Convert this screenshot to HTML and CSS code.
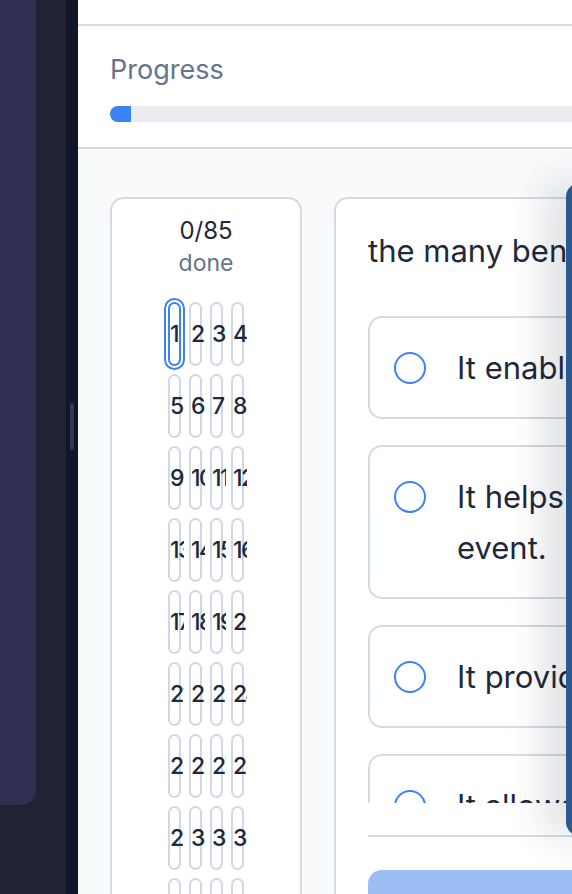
FILE: index.html
```html
<!DOCTYPE html>
<html lang="en">
<head>
<meta charset="utf-8">
<title>Quiz</title>
<link rel="stylesheet" href="styles.css">
</head>
<body>
<div class="sidebar"><div class="sidebar-panel"></div></div>
<div class="rail"><div class="thumb"></div></div>
<main class="main">
  <div class="topbar"></div>
  <section class="progress">
    <div class="progress-label">Progress</div>
    <div class="track"><div class="fill"></div></div>
  </section>
  <section class="content">
    <aside class="nav-card">
      <div class="counter">0/85</div>
      <div class="done">done</div>
      <div class="grid">
        <div class="pill current">1</div><div class="pill">2</div><div class="pill">3</div><div class="pill">4</div>
        <div class="pill">5</div><div class="pill">6</div><div class="pill">7</div><div class="pill">8</div>
        <div class="pill">9</div><div class="pill">10</div><div class="pill">11</div><div class="pill">12</div>
        <div class="pill">13</div><div class="pill">14</div><div class="pill">15</div><div class="pill">16</div>
        <div class="pill">17</div><div class="pill">18</div><div class="pill">19</div><div class="pill">20</div>
        <div class="pill">21</div><div class="pill">22</div><div class="pill">23</div><div class="pill">24</div>
        <div class="pill">25</div><div class="pill">26</div><div class="pill">27</div><div class="pill">28</div>
        <div class="pill">29</div><div class="pill">30</div><div class="pill">31</div><div class="pill">32</div>
        <div class="pill">33</div><div class="pill">34</div><div class="pill">35</div><div class="pill">36</div>
        <div class="pill">37</div><div class="pill">38</div><div class="pill">39</div><div class="pill">40</div>
        <div class="pill">41</div><div class="pill">42</div><div class="pill">43</div><div class="pill">44</div>
        <div class="pill">45</div><div class="pill">46</div><div class="pill">47</div><div class="pill">48</div>
        <div class="pill">49</div><div class="pill">50</div><div class="pill">51</div><div class="pill">52</div>
        <div class="pill">53</div><div class="pill">54</div><div class="pill">55</div><div class="pill">56</div>
        <div class="pill">57</div><div class="pill">58</div><div class="pill">59</div><div class="pill">60</div>
        <div class="pill">61</div><div class="pill">62</div><div class="pill">63</div><div class="pill">64</div>
        <div class="pill">65</div><div class="pill">66</div><div class="pill">67</div><div class="pill">68</div>
        <div class="pill">69</div><div class="pill">70</div><div class="pill">71</div><div class="pill">72</div>
        <div class="pill">73</div><div class="pill">74</div><div class="pill">75</div><div class="pill">76</div>
        <div class="pill">77</div><div class="pill">78</div><div class="pill">79</div><div class="pill">80</div>
        <div class="pill">81</div><div class="pill">82</div><div class="pill">83</div><div class="pill">84</div>
        <div class="pill">85</div>
      </div>
    </aside>
    <article class="question-card">
      <div class="scroll">
        <p class="question">the many benefits of planning an event carefully in advance?</p>
        <div class="options">
          <label class="option"><span class="radio"></span><span class="option-text">It enables better coordination among the whole team.</span></label>
          <label class="option"><span class="radio"></span><span class="option-text">It helps make sure that everything goes smoothly on the day of the<br>event.</span></label>
          <label class="option"><span class="radio"></span><span class="option-text">It provides a clear overview of the budget and expenses.</span></label>
          <label class="option"><span class="radio"></span><span class="option-text">It allows attendees to plan their own schedules early.</span></label>
        </div>
      </div>
      <div class="footer">
        <button class="submit" disabled>Submit answer</button>
      </div>
    </article>
  </section>
</main>
<div class="drawer"></div>
</body>
</html>
```
FILE: styles.css
```css
* { box-sizing: border-box; }
html, body { margin: 0; height: 100%; overflow: hidden; }
body {
  display: flex;
  font-family: Inter, "Noto Sans", sans-serif;
  background: #ffffff;
  color: #1e293b;
}
.sidebar { flex: none; width: 66px; height: 894px; background: #1f2333; }
.sidebar-panel { width: 36px; height: 805px; background: #312f52; border-bottom-right-radius: 15px; }
.rail { flex: none; width: 12px; height: 894px; background: #111726; display: flex; justify-content: center; }
.thumb { width: 4px; height: 47px; margin-top: 403px; border-radius: 2px; background: #363b4c; }
.main { flex: none; width: 1200px; display: flex; flex-direction: column; height: 894px; }
.topbar { flex: none; height: 26px; background: #fff; border-bottom: 2px solid #d3dbe5; }
.progress { flex: none; padding: 28px 32px 25px; border-bottom: 2px solid #d3dbe5; background: #fff; }
.progress-label { font-size: 27px; line-height: 32px; color: #64748b; }
.track { margin-top: 20px; height: 16px; border-radius: 8px; background: #e9edf2; overflow: hidden; }
.fill { width: 21px; height: 100%; background: #3b82f6; }
.content {
  flex: 1;
  background: #f8fafc;
  padding: 48px 32px 0;
  display: flex;
  gap: 32px;
  align-items: flex-start;
}
.nav-card {
  flex: none;
  width: 192px;
  background: #fff;
  border: 2px solid #d3dbe5;
  border-radius: 14px;
  padding: 16px 0 24px;
  text-align: center;
}
.counter { font-size: 24px; line-height: 32px; color: #1e293b; }
.done { font-size: 23px; line-height: 32px; color: #64748b; }
.grid {
  margin-top: 23px;
  display: grid;
  grid-template-columns: repeat(4, 13px);
  gap: 8px;
  justify-content: center;
}
.pill {
  height: 64px;
  border: 2px solid #cfd8e3;
  border-radius: 999px;
  background: #fff;
  font-size: 23px;
  font-weight: 500;
  letter-spacing: -1.5px;
  line-height: 60px;
  text-align: left;
  white-space: nowrap;
  overflow: clip;
  overflow-clip-margin: 5px;
  color: #1e293b;
}
.pill.current { border-color: #3b82f6; box-shadow: 0 0 0 2px #fff, 0 0 0 4px #3b82f6; }
.question-card {
  flex: none;
  width: 800px;
  background: #fff;
  border: 2px solid #d3dbe5;
  border-radius: 14px;
  padding: 32px 32px 40px;
}
.scroll { height: 572px; overflow: hidden; }
.question { margin: 0 0 45px; font-size: 31px; line-height: 40px; white-space: nowrap; color: #1e293b; }
.options { display: flex; flex-direction: column; gap: 26px; }
.option {
  display: flex;
  align-items: flex-start;
  gap: 31px;
  padding: 24px;
  border: 2px solid #d3dbe5;
  border-radius: 14px;
  background: #fff;
}
.radio {
  flex: none;
  width: 32px;
  height: 32px;
  margin-top: 10px;
  border: 2px solid #3b82f6;
  border-radius: 50%;
}
.option-text { font-size: 31px; line-height: 51px; white-space: nowrap; color: #1e293b; }
.footer { margin-top: 32px; border-top: 2px solid #d3dbe5; padding-top: 33px; }
.submit {
  display: block;
  width: 100%;
  height: 64px;
  border: none;
  border-radius: 14px;
  background: #9dbdf5;
  color: #fff;
  font: 600 26px Inter, sans-serif;
}
.drawer {
  position: fixed;
  left: 566px;
  top: 183px;
  width: 40px;
  height: 653px;
  background: #2b5a91;
  border-radius: 14px 0 0 14px;
  box-shadow: -18px 0 40px rgba(15, 23, 42, 0.16);
}
```
